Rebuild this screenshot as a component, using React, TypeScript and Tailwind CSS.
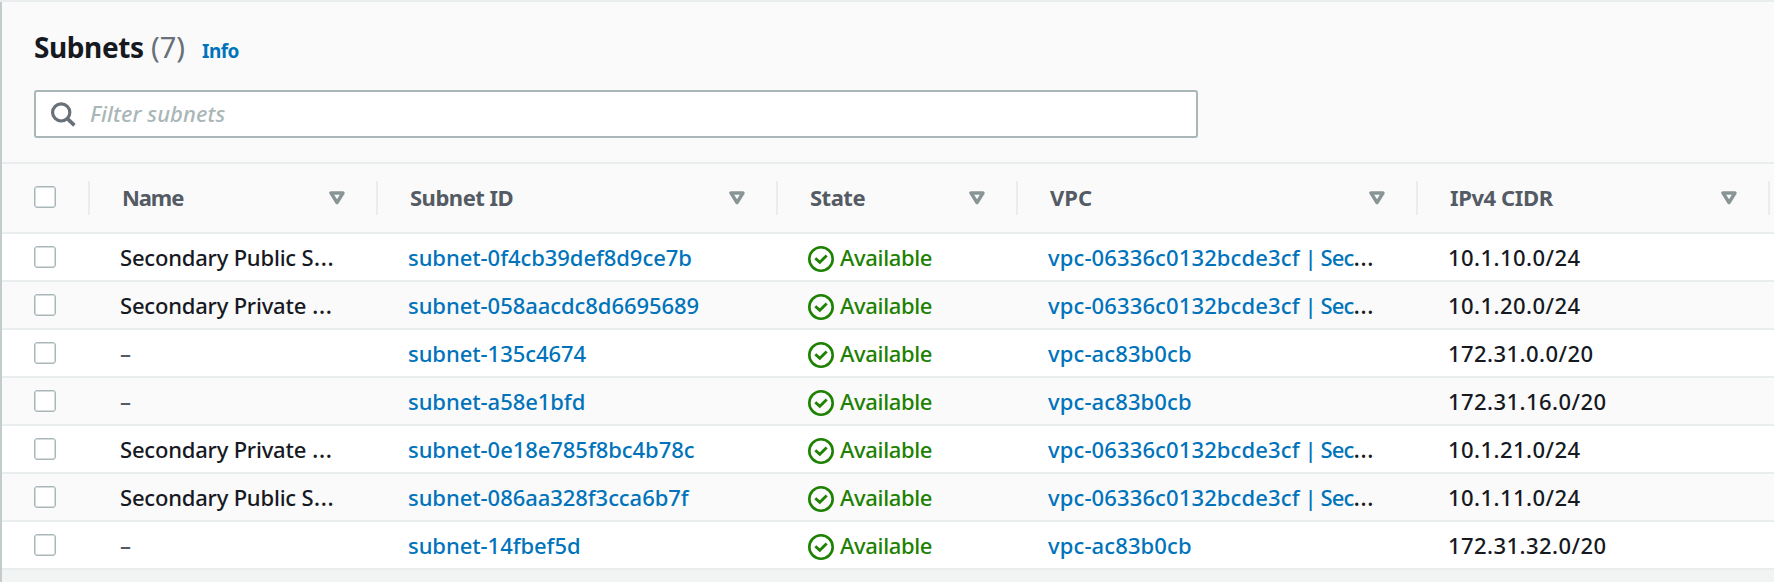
import React from "react";

type Row = { name: string; id: string; vpc: string; vpcName?: string; cidr: string };

const SEC = { vpc: "vpc-06336c0132bcde3cf", vpcName: " | Sec" };

const rows: Row[] = [
  { name: "Secondary Public S…", id: "subnet-0f4cb39def8d9ce7b", ...SEC, cidr: "10.1.10.0/24" },
  { name: "Secondary Private …", id: "subnet-058aacdc8d6695689", ...SEC, cidr: "10.1.20.0/24" },
  { name: "–", id: "subnet-135c4674", vpc: "vpc-ac83b0cb", cidr: "172.31.0.0/20" },
  { name: "–", id: "subnet-a58e1bfd", vpc: "vpc-ac83b0cb", cidr: "172.31.16.0/20" },
  { name: "Secondary Private …", id: "subnet-0e18e785f8bc4b78c", ...SEC, cidr: "10.1.21.0/24" },
  { name: "Secondary Public S…", id: "subnet-086aa328f3cca6b7f", ...SEC, cidr: "10.1.11.0/24" },
  { name: "–", id: "subnet-14fbef5d", vpc: "vpc-ac83b0cb", cidr: "172.31.32.0/20" },
];

const columns = [
  { label: "Name", width: "w-[288px]", spacing: "tracking-[-1.1px]" },
  { label: "Subnet ID", width: "w-[400px]", spacing: "tracking-[-0.5px]" },
  { label: "State", width: "w-[240px]", spacing: "tracking-[-0.5px]" },
  { label: "VPC", width: "w-[400px]", spacing: "tracking-[0px]" },
  { label: "IPv4 CIDR", width: "w-[352px]", spacing: "tracking-[-0.4px]" },
];

function Checkbox() {
  return (
    <span
      role="checkbox"
      aria-checked="false"
      className="block h-[22px] w-[22px] rounded-[3px] border border-[#aab7b8] bg-white shadow-[inset_0_0_0_1px_#d5dbdc]"
    />
  );
}

function Dots() {
  return <span className="text-[26px] leading-none font-normal">…</span>;
}

function SortIcon() {
  return (
    <svg width="16" height="14" viewBox="0 0 16 14" fill="none">
      <path d="M2 2H14L8 11.5Z" stroke="#879596" strokeWidth="3.4" strokeLinejoin="round" />
    </svg>
  );
}

function StatusIcon() {
  return (
    <svg className="mt-1 shrink-0" width="26" height="26" viewBox="0 0 26 26" fill="none" stroke="#1d8102">
      <circle cx="13" cy="13" r="11.7" strokeWidth="2.6" />
      <path d="M7.3 12.2L11.8 16.3L18.7 9.6" strokeWidth="2.8" />
    </svg>
  );
}

function SearchIcon() {
  return (
    <svg className="mt-[2px]" width="26" height="26" viewBox="0 0 26 26" fill="none" stroke="#687078">
      <circle cx="10.2" cy="10.4" r="8.6" strokeWidth="3.2" />
      <path d="M16.4 16.6L23.4 23.4" strokeWidth="3.6" />
    </svg>
  );
}

export default function App() {
  return (
    <div className="flex h-[582px] w-[1774px] flex-col overflow-hidden border-t-2 border-[#eaeded] bg-[#f2f3f3] font-['Noto_Sans',sans-serif] text-[22px] font-medium text-[#16191f]">
      <div className="flex flex-1 flex-col border-l-2 border-[#c3cbcc]">
        <header className="h-[162px] shrink-0 border-b-2 border-[#eaeded] bg-[#fafafa] pl-8">
          <div className="flex h-[88px] items-baseline pt-[25px] leading-[40px]">
            <h1 className="w-[117px] text-[28px] font-bold tracking-[-0.4px]">Subnets</h1>
            <span className="w-[51px] text-[29px] font-normal text-[#687078]">(7)</span>
            <a className="text-[19px] font-bold tracking-[-0.5px] text-[#0073bb]">Info</a>
          </div>
          <div className="flex h-12 w-[1164px] items-center rounded-[3px] border-2 border-[#aab7b8] bg-white pl-[15px]">
            <SearchIcon />
            <span className="pb-[2px] pl-[13px] text-[22px] tracking-[0.1px] text-[#aab7b8] italic">
              Filter subnets
            </span>
          </div>
        </header>

        <div className="flex h-[70px] shrink-0 items-center border-b-2 border-[#eaeded] bg-[#fafafa] font-bold text-[#545b64]">
          <div className="flex h-[34px] w-[88px] items-center border-r-2 border-[#eaeded] pb-[2px] pl-8">
            <Checkbox />
          </div>
          {columns.map((c) => (
            <div
              key={c.label}
              className={`flex h-[34px] shrink-0 items-center justify-between border-r-2 border-[#eaeded] pr-[31px] pl-8 ${c.width}`}
            >
              <span className={`pb-[2px] ${c.spacing}`}>{c.label}</span>
              <SortIcon />
            </div>
          ))}
        </div>

        {rows.map((r, i) => (
          <div
            key={r.id}
            className={`flex h-12 shrink-0 items-center border-b-2 border-[#eaeded] leading-[46px] whitespace-nowrap ${i % 2 ? "bg-[#fafafa]" : "bg-white"}`}
          >
            <div className="w-[118px] pl-8">
              <Checkbox />
            </div>
            <div className={`w-[288px] tracking-[-0.2px] ${r.name === "–" ? "text-[#545b64]" : ""}`}>
              {r.name.replace("…", "")}
              {r.name.endsWith("…") && <Dots />}
            </div>
            <a className="w-[400px] tracking-[-0.06px] text-[#0073bb]">{r.id}</a>
            <div className="flex w-[240px] items-center gap-[6px] text-[#1d8102]">
              <StatusIcon />
              <span className="tracking-[-0.35px]">Available</span>
            </div>
            <div className="w-[400px] tracking-[0.12px]">
              <a className="text-[#0073bb]">
                {r.vpc}
                {r.vpcName && <span className="tracking-[-0.9px]">{r.vpcName}</span>}
              </a>
              {r.vpcName && <Dots />}
            </div>
            <div className="tracking-[0.45px]">{r.cidr}</div>
          </div>
        ))}
      </div>
    </div>
  );
}
